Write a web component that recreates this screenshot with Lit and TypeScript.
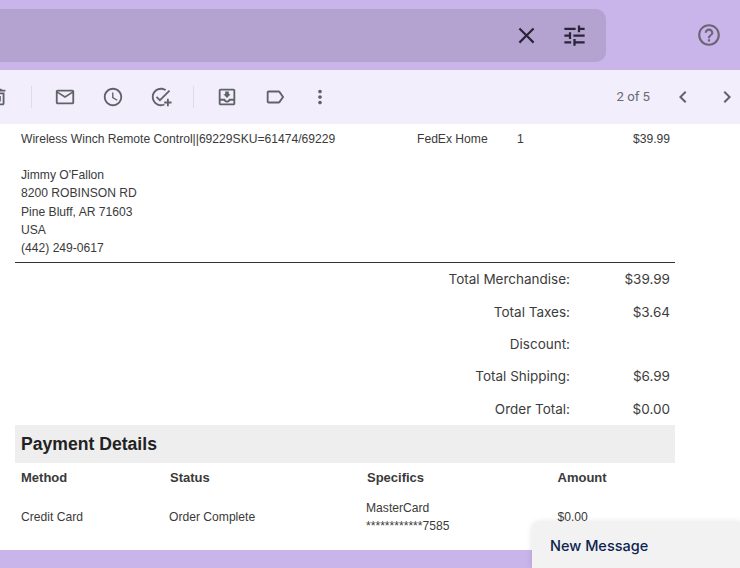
import { LitElement, html, css, svg } from 'lit';
import { customElement } from 'lit/decorators.js';

const icon = (d: unknown, cls = '') => html`<svg class="icon ${cls}" viewBox="0 0 24 24">${d}</svg>`;

const P = {
  close: svg`<path d="M19 6.41 17.59 5 12 10.59 6.41 5 5 6.41 10.59 12 5 17.59 6.41 19 12 13.41 17.59 19 19 17.59 13.41 12z"/>`,
  tune: svg`<path d="M3 17v2h6v-2H3zM3 5v2h10V5H3zm10 16v-2h8v-2h-8v-2h-2v6h2zM7 9v2H3v2h4v2h2V9H7zm14 4v-2H11v2h10zm-6-4h2V7h4V5h-4V3h-2v6z"/>`,
  help: svg`<path d="M11 18h2v-2h-2v2zm1-16C6.48 2 2 6.48 2 12s4.48 10 10 10 10-4.48 10-10S17.52 2 12 2zm0 18c-4.41 0-8-3.59-8-8s3.59-8 8-8 8 3.59 8 8-3.59 8-8 8zm0-14c-2.21 0-4 1.79-4 4h2c0-1.1.9-2 2-2s2 .9 2 2c0 2-3 1.75-3 5h2c0-2.25 3-2.5 3-5 0-2.21-1.79-4-4-4z"/>`,
  trash: svg`<path d="M6 19c0 1.1.9 2 2 2h8c1.1 0 2-.9 2-2V7H6v12zM8 9h8v10H8V9zm7.500-5-1-1h-5l-1 1H5v2h14V4z"/><path d="M10 11h1.500v6H10zm2.500 0H14v6h-1.500z"/>`,
  mail: svg`<path d="M20 4H4c-1.100 0-2 .9-2 2v12c0 1.100.9 2 2 2h16c1.100 0 2-.9 2-2V6c0-1.100-.9-2-2-2zm0 14H4V8l8 5 8-5v10zm-8-7L4 6h16l-8 5z"/>`,
  clock: svg`<path d="M11.990 2C6.470 2 2 6.480 2 12s4.470 10 9.990 10C17.520 22 22 17.520 22 12S17.520 2 11.990 2zM12 20c-4.420 0-8-3.580-8-8s3.580-8 8-8 8 3.580 8 8-3.580 8-8 8zm.5-13H11v6l5.250 3.150.75-1.230-4.500-2.670z"/>`,
  addTask: svg`<path d="M12 2C6.480 2 2 6.480 2 12s4.480 10 10 10c1.500 0 2.900-.3 4.200-.9l-.9-1.800c-1 .45-2.100.7-3.300.7-4.420 0-8-3.580-8-8s3.580-8 8-8c1.600 0 3.100.47 4.350 1.280l1.440-1.440C15.900 2.700 14 2 12 2z"/><path d="M20.600 4.300 10.800 14.100l-3-3-1.400 1.400 4.400 4.400L22 5.700z"/><path d="M18.500 14h2v3h3v2h-3v3h-2v-3h-3v-2h3z"/>`,
  inbox: svg`<path d="M19 3H5c-1.100 0-2 .9-2 2v14c0 1.100.9 2 2 2h14c1.100 0 2-.9 2-2V5c0-1.100-.9-2-2-2zm0 16H5v-3h3.560c.69 1.190 1.970 2 3.450 2s2.750-.81 3.450-2H19v3zm0-5h-4.990c0 1.100-.9 2-2 2s-2-.9-2-2H5V5h14v9zm-3-5h-2V6h-4v3H8l4 4 4-4z"/>`,
  label: svg`<path d="M17.630 5.840C17.270 5.330 16.670 5 16 5L5 5.010C3.900 5.010 3 5.900 3 7v10c0 1.100.9 1.990 2 1.990L16 19c.67 0 1.270-.33 1.630-.84L22 12l-4.370-6.160zM16 17H5V7h11l3.550 5L16 17z"/>`,
  more: svg`<path d="M12 8c1.100 0 2-.9 2-2s-.9-2-2-2-2 .9-2 2 .9 2 2 2zm0 2c-1.100 0-2 .9-2 2s.9 2 2 2 2-.9 2-2-.9-2-2-2zm0 6c-1.100 0-2 .9-2 2s.9 2 2 2 2-.9 2-2-.9-2-2-2z"/>`,
  prev: svg`<path d="M15.410 7.410 14 6l-6 6 6 6 1.410-1.410L10.830 12z"/>`,
  next: svg`<path d="M10 6 8.590 7.410 13.170 12l-4.580 4.590L10 18l6-6z"/>`,
};

const totals = [
  ['Total Merchandise:', '$39.99'],
  ['Total Taxes:', '$3.64'],
  ['Discount:', ''],
  ['Total Shipping:', '$6.99'],
  ['Order Total:', '$0.00'],
];

@customElement('app-root')
export class AppRoot extends LitElement {
  static styles = css`
    :host {
      display: block;
      width: 740px;
      height: 568px;
      overflow: hidden;
      position: relative;
      background: #c9b5e9;
      font-family: 'Liberation Sans', Arial, sans-serif;
    }

    .icon {
      width: 24px;
      height: 24px;
      fill: #5f6368;
      display: block;
      flex: none;
    }

    .header {
      height: 70px;
      display: flex;
      align-items: flex-start;
      padding-top: 9px;
      box-sizing: border-box;
    }
    .search {
      width: 606px;
      height: 53px;
      background: #b4a3d1;
      border-radius: 0 10px 10px 0;
      display: flex;
      align-items: center;
      justify-content: flex-end;
      gap: 21px;
      padding: 0 18px 1px 0;
      box-sizing: border-box;
      flex: none;
    }
    .search .icon {
      width: 27px;
      height: 27px;
      fill: #2a2438;
    }
    .header .help {
      width: 26px;
      height: 26px;
      margin: 13px 0 0 90px;
      fill: #6b6475;
    }

    .toolbar {
      height: 54px;
      background: #f2eefb;
      display: flex;
      align-items: center;
      padding-bottom: 1px;
      box-sizing: border-box;
    }
    .toolbar .group {
      display: flex;
      gap: 26px;
      align-items: center;
    }
    .toolbar .group .icon,
    .toolbar .trash {
      width: 22px;
      height: 22px;
    }
    .toolbar .trash {
      margin-left: -12px;
    }
    .toolbar .group .more {
      margin-left: -3px;
    }
    .sep {
      width: 1px;
      height: 22px;
      background: #dfdbe8;
      margin: 0 22px 0 21px;
    }
    .count {
      margin-left: auto;
      font: 13.200px Roboto, sans-serif;
      color: #666a70;
    }
    .pager {
      display: flex;
      gap: 20px;
      margin: 0 1px 0 21px;
    }

    .mail {
      height: 426px;
      background: #fff;
      padding: 0 0 0 15px;
      box-sizing: border-box;
      overflow: hidden;
      font-size: 12.120px;
      line-height: 18px;
      color: #3a3a3a;
    }
    .sheet {
      width: 660px;
    }
    .item {
      display: grid;
      grid-template-columns: 396px 100px 1fr auto;
      padding: 6px 5px 0 6px;
    }
    .address {
      margin-top: 18px;
      padding: 0 0 5px 6px;
      border-bottom: 1px solid #333;
      line-height: 18.250px;
    }
    .totals {
      display: grid;
      grid-template-columns: 1fr 100px;
      grid-auto-rows: 32.300px;
      align-items: center;
      padding: 0 5px 0.500px 0;
      font: 13.500px Inter, sans-serif;
      color: #3c3c3c;
      text-align: right;
    }
    .band {
      background: #eee;
      height: 38px;
      display: flex;
      align-items: center;
      padding-left: 6px;
      font-size: 17.600px;
      font-weight: 700;
      color: #222;
    }
    .pay {
      display: grid;
      padding-left: 6px;
    }
    .pay.head {
      grid-template-columns: 149px 197px 190.500px 1fr;
      font-size: 13px;
      font-weight: 700;
      height: 30px;
      align-items: center;
    }
    .pay.row {
      grid-template-columns: 148px 197px 191.500px 1fr;
      align-items: center;
      height: 48px;
    }

    .compose {
      position: absolute;
      right: 0;
      bottom: 0;
      width: 208px;
      height: 46px;
      background: #f2f2f2;
      border-radius: 8px 0 0 0;
      box-shadow: 0 0 6px rgba(0, 0, 0, 0.12);
      box-sizing: border-box;
      padding: 15px 0 0 18px;
      font: 500 14.500px Inter, sans-serif;
      color: #0d2350;
    }
  `;

  render() {
    return html`
      <div class="header">
        <div class="search">${icon(P.close)}${icon(P.tune)}</div>
        ${icon(P.help, 'help')}
      </div>
      <div class="toolbar">
        ${icon(P.trash, 'trash')}
        <div class="sep"></div>
        <div class="group">${icon(P.mail)}${icon(P.clock)}${icon(P.addTask)}</div>
        <div class="sep"></div>
        <div class="group">${icon(P.inbox)}${icon(P.label)}${icon(P.more, 'more')}</div>
        <span class="count">2 of 5</span>
        <div class="pager">${icon(P.prev)}${icon(P.next)}</div>
      </div>
      <div class="mail">
        <div class="sheet">
          <div class="item">
            <span>Wireless Winch Remote Control||69229SKU=61474/69229</span>
            <span>FedEx Home</span>
            <span>1</span>
            <span>$39.99</span>
          </div>
          <div class="address">
            Jimmy O'Fallon<br />8200 ROBINSON RD<br />Pine Bluff, AR 71603<br />USA<br />(442) 249-0617
          </div>
          <div class="totals">
            ${totals.map(([k, v]) => html`<span>${k}</span><span>${v}</span>`)}
          </div>
          <div class="band">Payment Details</div>
          <div class="pay head"><span>Method</span><span>Status</span><span>Specifics</span><span>Amount</span></div>
          <div class="pay row">
            <span>Credit Card</span>
            <span>Order Complete</span>
            <span>MasterCard<br />************7585</span>
            <span>$0.00</span>
          </div>
        </div>
      </div>
      <div class="compose">New Message</div>
    `;
  }
}
